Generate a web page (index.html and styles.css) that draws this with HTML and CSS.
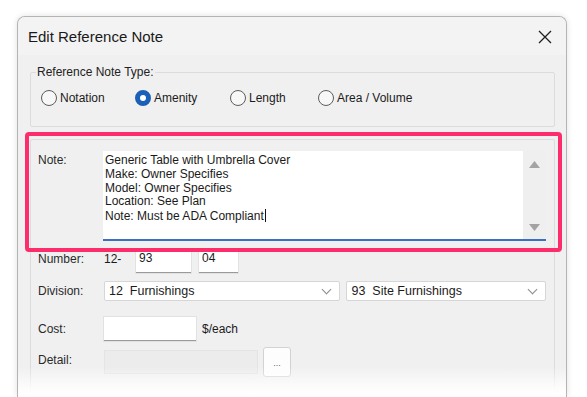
FILE: index.html
```html
<!DOCTYPE html>
<html lang="en">
<head>
    <meta charset="UTF-8">
    <title>Edit Reference Note</title>
    <link rel="stylesheet" href="styles.css">
</head>
<body>
    <div class="window">
        <div class="titlebar">
            <span class="title">Edit Reference Note</span>
            <svg class="close" width="14" height="14" viewBox="0 0 14 14">
                <path d="M1 1 L13 13 M13 1 L1 13" stroke="#1f1f1f" stroke-width="1.3" fill="none"/>
            </svg>
        </div>

        <fieldset class="group type-group">
            <legend>Reference Note Type:</legend>
            <div class="radio-row">
                <label class="radio r-notation"><span class="dot"></span>Notation</label>
                <label class="radio r-amenity checked"><span class="dot"></span>Amenity</label>
                <label class="radio r-length"><span class="dot"></span>Length</label>
                <label class="radio"><span class="dot"></span>Area / Volume</label>
            </div>
        </fieldset>

        <fieldset class="group fields-group">
            <div class="row note-row">
                <span class="label">Note:</span>
                <div class="note-box">
                    <div class="note-text">Generic Table with Umbrella Cover<br>Make: Owner Specifies<br>Model: Owner Specifies<br>Location: See Plan<br>Note: Must be ADA Compliant<span class="caret"></span></div>
                    <div class="scrollbar">
                        <svg width="11" height="7" viewBox="0 0 11 7"><path d="M5.5 0 L11 7 L0 7 Z" fill="#a3a3a3"/></svg>
                        <svg width="11" height="7" viewBox="0 0 11 7"><path d="M0 0 L11 0 L5.5 7 Z" fill="#a3a3a3"/></svg>
                    </div>
                </div>
            </div>

            <div class="row number-row">
                <span class="label">Number:</span>
                <span class="prefix">12-</span>
                <div class="input num-a">93</div>
                <div class="input num-b">04</div>
            </div>

            <div class="row division-row">
                <span class="label">Division:</span>
                <div class="select sel-a"><span>12&nbsp;&nbsp;Furnishings</span><span class="chev"></span></div>
                <div class="select sel-b"><span>93&nbsp;&nbsp;Site Furnishings</span><span class="chev"></span></div>
            </div>

            <div class="row cost-row">
                <span class="label">Cost:</span>
                <div class="input cost"></div>
                <span class="unit">$/each</span>
            </div>

            <div class="row detail-row">
                <span class="label">Detail:</span>
                <div class="input disabled"></div>
                <div class="btn-more">...</div>
            </div>
        </fieldset>

        <div class="highlight"></div>
        <div class="fade"></div>
    </div>
</body>
</html>
```

FILE: styles.css
```css
body {
    margin: 0;
    background: #ffffff;
    font-family: "Liberation Sans", Arial, sans-serif;
    font-size: 12px;
    color: #1b1b1b;
}

.window {
    position: relative;
    margin: 16px 0 0 17px;
    width: 548px;
    height: 380px;
    background: #f0f0f0;
    border: 1px solid #b4b4b4;
    border-bottom: none;
    border-radius: 8px 8px 0 0;
    box-shadow: 0 0 6px rgba(0, 0, 0, 0.12);
    overflow: hidden;
}

.titlebar {
    height: 38px;
    display: flex;
    align-items: center;
    justify-content: space-between;
    padding: 0 14px 0 10px;
    background: #f3f3f3;
}

.title {
    font-size: 15px;
    color: #1a1a1a;
}

.close {
    margin-top: 1px;
}

.group {
    margin: 0 11px 0 12px;
    border: 1px solid #dcdcdc;
    border-radius: 2px;
    padding: 0;
    min-width: 0;
}

.type-group {
    margin-top: 10px;
    padding: 11px 0 20px 10px;
}

.type-group legend {
    margin-left: -5px;
    padding: 0 1px;
    line-height: 14px;
    color: #222;
}

.radio-row {
    display: flex;
    height: 16px;
    align-items: center;
}

.radio {
    display: flex;
    align-items: center;
    gap: 3px;
    line-height: 14px;
}

.r-notation { width: 94px; }
.r-amenity { width: 95px; }
.r-length { width: 88px; }

.dot {
    box-sizing: border-box;
    width: 16px;
    height: 16px;
    border: 1px solid #5c5c5c;
    border-radius: 50%;
    background: #f7f7f7;
}

.checked .dot {
    border: 5px solid #1a5fb8;
    background: #ffffff;
}

.fields-group {
    margin-top: 12px;
    padding: 11px 8px 0 7px;
    height: 300px;
}

.row {
    display: flex;
    align-items: center;
}

.label {
    width: 65px;
    flex-shrink: 0;
    color: #2a2a2a;
}

.note-row {
    align-items: flex-start;
}

.note-row .label {
    margin-top: 2px;
}

.note-box {
    flex: 1;
    display: flex;
    height: 88px;
    background: #ffffff;
    border-bottom: 2px solid #3b70c0;
}

.note-text {
    flex: 1;
    padding: 3px 2px 0;
    line-height: 13.8px;
    color: #1a1a1a;
}

.caret {
    display: inline-block;
    width: 1px;
    height: 13px;
    margin-left: 1px;
    vertical-align: -2px;
    background: #111;
}

.scrollbar {
    width: 23px;
    background: #efefef;
    display: flex;
    flex-direction: column;
    justify-content: space-between;
    align-items: center;
    padding: 10px 0 8px;
}

.number-row {
    margin-top: 10px;
    height: 22px;
    align-items: flex-start;
}

.number-row .label,
.prefix {
    margin-top: 1px;
}

.prefix {
    width: 32px;
    padding-left: 1px;
}

.input {
    box-sizing: border-box;
    background: #ffffff;
    border-bottom: 1px solid #9a9a9a;
    box-shadow: 0 0 0 1px #e2e2e2;
    padding: 0 3px;
    line-height: 14px;
}

.num-a {
    width: 55px;
    height: 22px;
    margin-right: 8px;
}

.num-b {
    width: 39px;
    height: 22px;
}

.division-row {
    margin-top: 8px;
}

.select {
    box-sizing: border-box;
    height: 20px;
    background: #ffffff;
    border: 1px solid #d6d6d6;
    border-radius: 2px;
    display: flex;
    align-items: center;
    justify-content: space-between;
    padding: 0 9px 0 4px;
    font-size: 12.5px;
}

.sel-a { width: 237px; margin-left: 1px; }
.sel-b { width: 200px; margin-left: 6px; }

.chev {
    width: 6px;
    height: 6px;
    border-right: 1px solid #8a8a8a;
    border-bottom: 1px solid #8a8a8a;
    transform: translateY(-2px) rotate(45deg);
}

.cost-row {
    margin-top: 16px;
}

.cost-row .label {
    margin-top: -1px;
}

.cost {
    width: 92px;
    height: 24px;
    margin-left: 1px;
}

.unit {
    margin-left: 6px;
}

.detail-row {
    margin-top: 6px;
    height: 30px;
}

.detail-row .label {
    margin-top: -5px;
}

.disabled {
    width: 154px;
    height: 24px;
    margin-left: 1px;
    background: #ececec;
    border: 1px solid #e4e4e4;
    box-shadow: none;
}

.btn-more {
    box-sizing: border-box;
    width: 28px;
    height: 30px;
    margin-left: 5px;
    background: #fdfdfd;
    border: 1px solid #d2d2d2;
    border-radius: 3px;
    display: flex;
    align-items: flex-end;
    justify-content: center;
    padding-bottom: 8px;
    font-size: 9px;
    color: #666;
}

.highlight {
    position: absolute;
    left: 7px;
    top: 115px;
    width: 537px;
    height: 120px;
    box-sizing: border-box;
    border: 4px solid #fd2d6b;
    border-radius: 4px;
}

.fade {
    position: absolute;
    left: 0;
    right: 0;
    bottom: 0;
    height: 30px;
    background: linear-gradient(to bottom, rgba(255, 255, 255, 0) 0%, rgba(255, 255, 255, 0.85) 70%, #ffffff 100%);
}
```
